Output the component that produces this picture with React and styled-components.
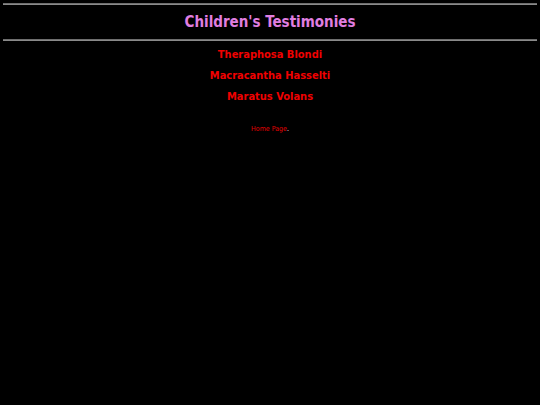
import styled, { createGlobalStyle } from 'styled-components';

const Global = createGlobalStyle`
  html, body {
    margin: 0;
    background: #000;
  }
  body {
    padding: 3px 3px;
    font-family: "DejaVu Sans Condensed", "DejaVu Sans", Tahoma, sans-serif;
    color: #fff;
  }
`;

const Rule = styled.hr`
  margin: 0;
  border: 0;
  height: 1px;
  background: #8a8a8a;
  border-top: 1px solid #6e6e6e;
`;

const Title = styled.h1`
  margin: 0;
  height: 34px;
  display: flex;
  align-items: center;
  justify-content: center;
  font-size: 15px;
  font-weight: bold;
  color: #e07ee0;
`;

const Links = styled.nav`
  display: flex;
  flex-direction: column;
  align-items: center;
  gap: 8px;
  padding-top: 7px;
`;

const SpeciesLink = styled.a`
  font-size: 11px;
  font-weight: bold;
  color: #f00000;
  text-decoration: none;
  line-height: 13px;
`;

const Footer = styled.p`
  margin: 0;
  padding-top: 22px;
  text-align: center;
  font-size: 7px;
  color: #fff;
`;

const HomeLink = styled.a`
  color: #e00000;
  text-decoration: none;
`;

const species = ['Theraphosa Blondi', 'Macracantha Hasselti', 'Maratus Volans'];

export default function App() {
  return (
    <>
      <Global />
      <Rule />
      <Title>Children's Testimonies</Title>
      <Rule />
      <Links>
        {species.map(name => (
          <SpeciesLink key={name} href="#">
            {name}
          </SpeciesLink>
        ))}
      </Links>
      <Footer>
        <HomeLink href="#">Home Page</HomeLink>.
      </Footer>
    </>
  );
}
